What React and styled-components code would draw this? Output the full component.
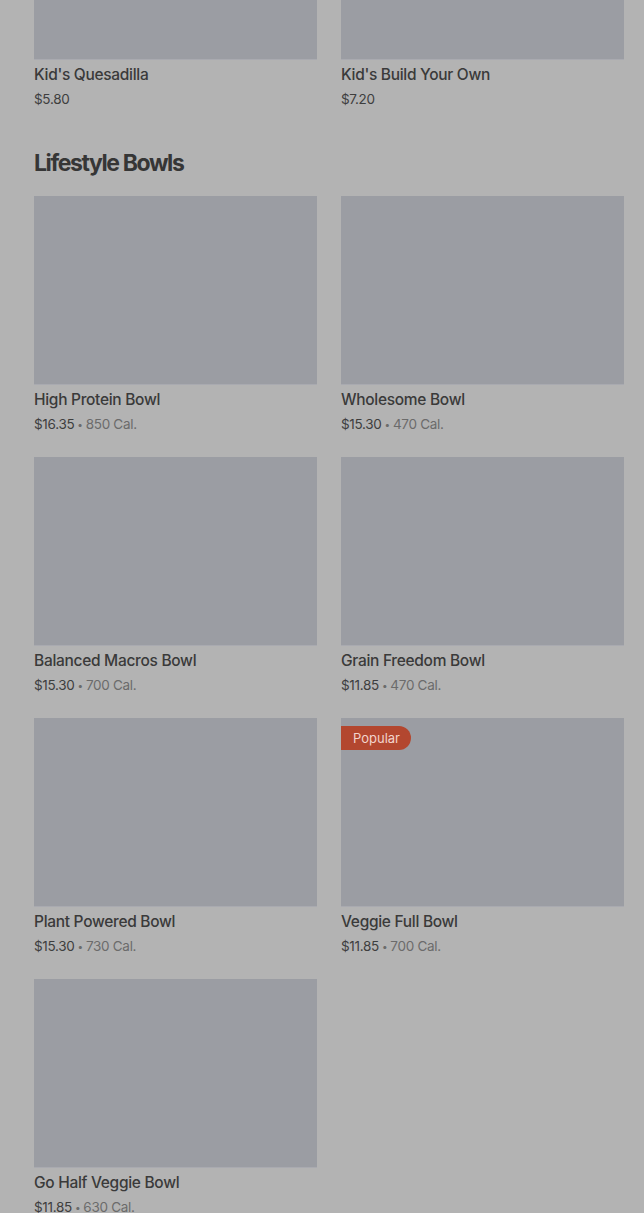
import React from 'react'
import styled, { createGlobalStyle } from 'styled-components'

const GlobalStyle = createGlobalStyle`
  html, body {
    margin: 0;
    padding: 0;
    background: #b3b3b3;
    font-family: Inter, "Noto Sans", sans-serif;
    overflow: hidden;
  }
`

const Page = styled.div`
  margin-top: -129px;
  padding: 0 20px 0 34px;
`

const Section = styled.section`
  & + & {
    margin-top: 38px;
  }
`

const Title = styled.h2`
  margin: 0 0 17px;
  font-size: 23px;
  line-height: 32px;
  font-weight: 700;
  letter-spacing: -1.4px;
  color: #363636;
`

const Grid = styled.div`
  display: grid;
  grid-template-columns: repeat(2, 1fr);
  column-gap: 24px;
  row-gap: 23px;
`

const Card = styled.div`
  position: relative;
`

const Thumb = styled.div`
  height: 188px;
  background: #9b9da3;
  box-shadow: 0 1px 0 #a9aab0;
`

const Badge = styled.span`
  position: absolute;
  top: 8px;
  left: 0;
  padding: 0 11px 0 12px;
  height: 24px;
  line-height: 24px;
  border-radius: 0 12px 12px 0;
  background: #b3472f;
  color: #f2d4cc;
  font-size: 13px;
  font-weight: 400;
`

const Name = styled.div`
  margin-top: 4px;
  font-size: 15.5px;
  line-height: 24px;
  font-weight: 500;
  letter-spacing: -0.3px;
  color: #3a3a3a;
`

const Meta = styled.div`
  margin-top: 2px;
  font-size: 13.5px;
  line-height: 20px;
  color: #3e3e3e;
  letter-spacing: -0.3px;
`

const Cal = styled.span`
  color: #6b6b6b;
  &::before {
    content: '•';
    margin: 0 3px;
    font-size: 10px;
    vertical-align: 1px;
  }
`

const kids = [
  { name: "Kid's Quesadilla", price: '$5.80' },
  { name: "Kid's Build Your Own", price: '$7.20' },
]

const bowls = [
  { name: 'High Protein Bowl', price: '$16.35', cal: '850 Cal.' },
  { name: 'Wholesome Bowl', price: '$15.30', cal: '470 Cal.' },
  { name: 'Balanced Macros Bowl', price: '$15.30', cal: '700 Cal.' },
  { name: 'Grain Freedom Bowl', price: '$11.85', cal: '470 Cal.' },
  { name: 'Plant Powered Bowl', price: '$15.30', cal: '730 Cal.' },
  { name: 'Veggie Full Bowl', price: '$11.85', cal: '700 Cal.', badge: 'Popular' },
  { name: 'Go Half Veggie Bowl', price: '$11.85', cal: '630 Cal.' },
]

const Item = ({ item }) => (
  <Card>
    <Thumb />
    {item.badge && <Badge>{item.badge}</Badge>}
    <Name>{item.name}</Name>
    <Meta>
      {item.price}
      {item.cal && <Cal>{item.cal}</Cal>}
    </Meta>
  </Card>
)

export default function App() {
  return (
    <>
      <GlobalStyle />
      <Page>
        <Section>
          <Grid>
            {kids.map(k => <Item key={k.name} item={k} />)}
          </Grid>
        </Section>
        <Section>
          <Title>Lifestyle Bowls</Title>
          <Grid>
            {bowls.map(b => <Item key={b.name} item={b} />)}
          </Grid>
        </Section>
      </Page>
    </>
  )
}
